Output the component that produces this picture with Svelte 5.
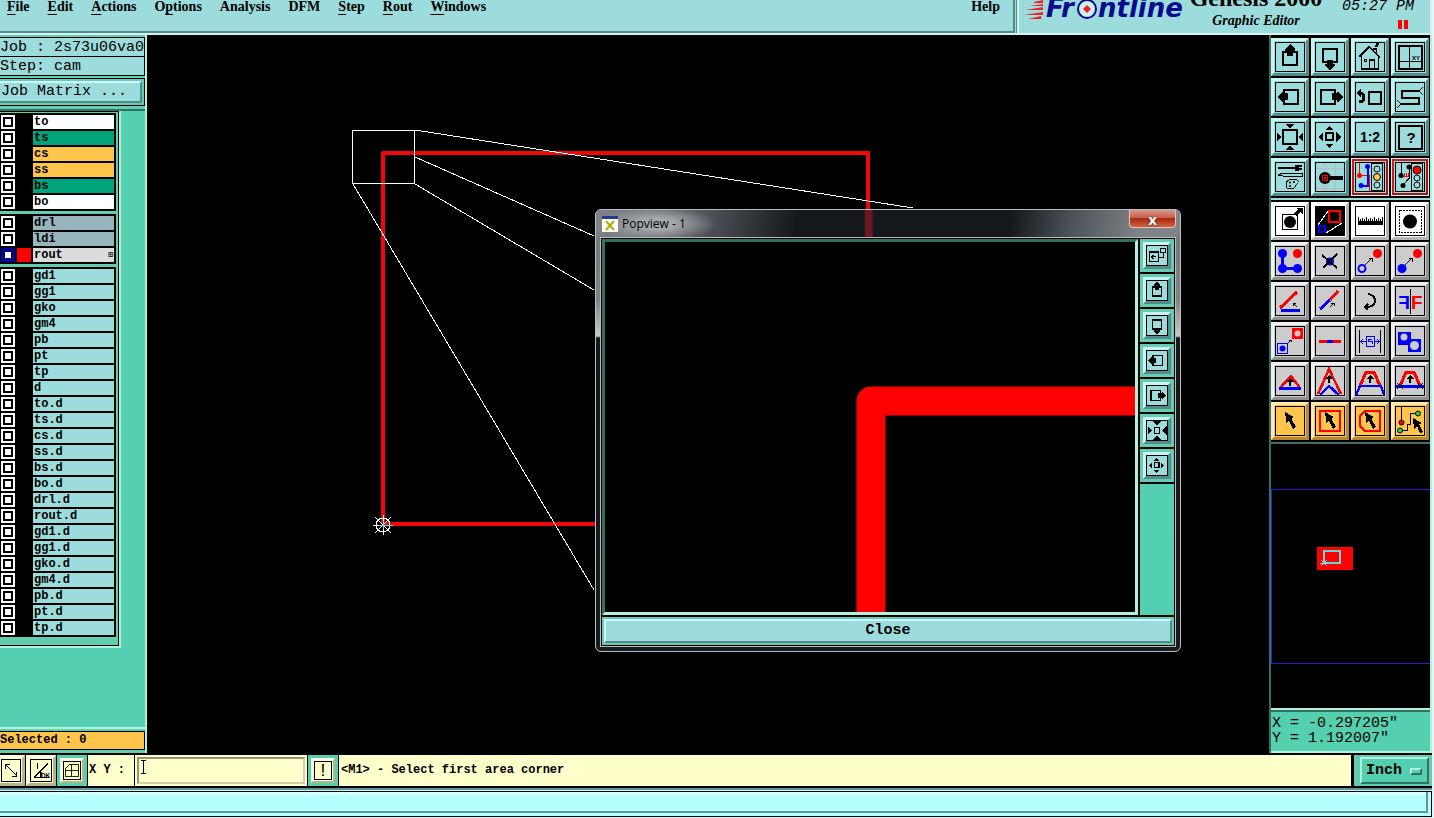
<script lang="ts">
	type Layer = { name: string; tone: string; active?: boolean };
	type Tool = { icon: string; label: string; tone?: string };

	const menus = [
		['', 'F', 'ile'],
		['', 'E', 'dit'],
		['', 'A', 'ctions'],
		['O', 'p', 'tions'],
		['Analysis', '', ''],
		['DFM', '', ''],
		['', 'S', 'tep'],
		['', 'R', 'out'],
		['', 'W', 'indows'],
	];

	const plain = (names: string): Layer[] => names.split(' ').map((name) => ({ name, tone: 'aqua' }));

	const layerGroups: Layer[][] = [
		[
			{ name: 'to', tone: 'white' },
			{ name: 'ts', tone: 'green' },
			{ name: 'cs', tone: 'amber' },
			{ name: 'ss', tone: 'amber' },
			{ name: 'bs', tone: 'green' },
			{ name: 'bo', tone: 'white' },
		],
		[
			{ name: 'drl', tone: 'slate' },
			{ name: 'ldi', tone: 'slate' },
			{ name: 'rout', tone: 'silver', active: true },
		],
		plain(
			'gd1 gg1 gko gm4 pb pt tp d to.d ts.d cs.d ss.d bs.d bo.d drl.d rout.d gd1.d gg1.d gko.d gm4.d pb.d pt.d tp.d'
		),
	];

	// Shared fragments of the 30-unit icon grid
	const cursor = '<path d="M10 6L19 11L16.5 13L21 21L18 23L14 15L11.5 17Z" fill="#000"/>';
	const upArrow = '<path d="M15 13V20" stroke="#000" stroke-width="2"/><path d="M11 16L15 12L19 16Z" fill="#000"/>';
	const neArrow = '<path d="M10 19L17 12M13.5 12H17V15.5" stroke="#000"/>';
	const light = '<rect x="16.5" y="1.5" width="11" height="27" stroke="#000"/>';

	const icons: Record<string, string> = {
		up: '<rect x="8" y="10" width="14" height="13" stroke="#000" stroke-width="2"/><path d="M15 2L20 7V9H18V14H12V9H10V7Z" fill="#000"/>',
		down: '<rect x="8" y="7" width="14" height="13" stroke="#000" stroke-width="2"/><path d="M12 18H18V22H20V24L15 28L10 24V22H12Z" fill="#000"/>',
		left: '<rect x="9" y="8" width="14" height="14" stroke="#000" stroke-width="2"/><path d="M2 15L7 10H8V11H13V18H8V20H7Z" fill="#000"/>',
		right: '<rect x="6" y="8" width="14" height="14" stroke="#000" stroke-width="2"/><path d="M28 15L23 10H22V11H17V18H22V20H23Z" fill="#000"/>',
		home: '<path d="M4 15L14 5L25 15M6.5 14V27H23.5V14M14.5 26V18H19.5V26M18.5 9V7H21.5V11M20 4H22V2H24" stroke="#000" stroke-width="1.5"/><rect x="9.5" y="17.5" width="2" height="2" stroke="#000"/>',
		panes: '<rect x="4" y="4" width="23" height="23" stroke="#000" stroke-width="2"/><path d="M14.5 4V27M4 19.5H27" stroke="#000"/><text x="17" y="18" font-size="6" font-weight="700" font-family="Liberation Sans, sans-serif" fill="#000">XY</text>',
		back: '<rect x="14" y="10" width="12" height="12" stroke="#000" stroke-width="2"/><path d="M5 11Q9 11 9 15Q9 20 4 20" stroke="#000" stroke-width="3"/><path d="M1 11L6 7V15Z" fill="#000"/>',
		serpent: '<path d="M25 9H7V16H24V22H5" stroke="#000" stroke-width="2"/><path d="M24 9L28 5M24 9L28 13M6 22L2 18M6 22L2 26" stroke="#000"/>',
		grow: '<rect x="8" y="8" width="14" height="14" stroke="#000" stroke-width="2"/><path d="M10 2H20L15 6ZM10 28H20L15 24ZM2 10V20L6 15ZM28 10V20L24 15Z" fill="#000"/>',
		squeeze: '<rect x="11" y="11" width="8" height="8" stroke="#000" stroke-width="2"/><path d="M8 1H22L15 8ZM8 29H22L15 22ZM1 8V22L8 15ZM29 8V22L22 15Z" fill="#000"/>',
		spread: '<rect x="11" y="11" width="7" height="7" stroke="#000" stroke-width="2"/><path d="M10 8H19L14.5 4ZM10 22H19L14.5 26ZM8 10V20L3 15ZM21 10V20L26 15Z" fill="#000"/>',
		ratio: '<text x="15" y="20" text-anchor="middle" font-size="14" font-weight="700" font-family="Liberation Sans, sans-serif" fill="#000">1:2</text>',
		help: '<rect x="4" y="4" width="23" height="23" stroke="#000" stroke-width="2"/><text x="16" y="21" text-anchor="middle" font-size="15" font-weight="700" font-family="Liberation Sans, sans-serif" fill="#000">?</text>',
		setup: '<path d="M3 6H20" stroke="#000" stroke-width="2"/><path d="M27 4H23V7H27" stroke="#000" stroke-width="2"/><path d="M20 3H24V9H20Z" fill="#000"/><path d="M3 13L8 11H27V14H8Z" stroke="#000"/><path d="M11 23Q11 17 18 17Q24 17 23 21Q22 22 21 23Q20 27 15 27Q11 27 11 23Z" stroke="#000"/><circle cx="15" cy="20.5" r="1" fill="#000"/><circle cx="19" cy="20" r="1" fill="#000"/><circle cx="15" cy="24" r="1" fill="#000"/>',
		probe: '<path d="M9.5 1V29M20.5 1V29M1 6.5H29M1 15.5H29M1 26.5H29" stroke="#c4b4bc"/><circle cx="10" cy="16" r="6" fill="#000"/><path d="M14 16H28" stroke="#000" stroke-width="4"/><rect x="7.5" y="13.5" width="5" height="5" stroke="#f00"/><rect x="9" y="15" width="2" height="2" fill="#f00"/>',
		netOn: `${light}<path d="M4.5 1V13.5H14.5V29" stroke="#f00"/><path d="M12.5 5V23.5H6" stroke="#00f" stroke-width="2"/><circle cx="12.5" cy="4.5" r="2.5" fill="#00f"/><circle cx="6" cy="23.5" r="2.5" fill="#00f"/><circle cx="4.5" cy="13.5" r="2.5" fill="#f00"/><circle cx="22" cy="7" r="3" stroke="#000"/><circle cx="22" cy="15" r="3.5" fill="#ffc44c" stroke="#000"/><circle cx="22" cy="23" r="3" stroke="#000"/>`,
		netOff: `${light}<path d="M6.5 1V13M14.5 5V16L8 23" stroke="#000"/><path d="M6 14H14M9.5 11V14M11.5 11V14M13.5 11V14" stroke="#f00"/><circle cx="14" cy="5" r="2.5" fill="#000"/><circle cx="6" cy="13.5" r="2.5" fill="#000"/><circle cx="8" cy="23.5" r="2.5" fill="#000"/><circle cx="22" cy="8" r="4" fill="#f00" stroke="#000"/><circle cx="22" cy="16" r="3" stroke="#000"/><circle cx="22" cy="23" r="3" stroke="#000"/>`,
		pull: '<rect x="7.5" y="8.5" width="15" height="15" stroke="#000"/><circle cx="15" cy="16" r="6" fill="#000"/><path d="M20 9L25 4" stroke="#000" stroke-width="3"/><path d="M21 2H28V9Z" fill="#000"/>',
		popview: '<rect width="30" height="30" fill="#000"/><path d="M13 5L3 19M27 17L11 27" stroke="#fff"/><rect x="14" y="5" width="11" height="11" stroke="#f00" stroke-width="2"/><rect x="4" y="20" width="6" height="6" stroke="#00f" stroke-width="2"/>',
		ruler: '<path d="M3 15H28V19H3Z" fill="#000"/><path d="M3.5 11V15M5.5 13V15M7.5 12V15M9.5 13V15M11.5 11V15M13.5 13V15M15.5 12V15M17.5 13V15M19.5 11V15M21.5 13V15M23.5 12V15M25.5 13V15M27.5 11V15" stroke="#000"/>',
		pick: '<rect x="4.5" y="4.5" width="22" height="22" stroke="#000" stroke-dasharray="2 1"/><circle cx="15" cy="15.5" r="7" fill="#000"/>',
		chain: '<path d="M7.5 7.5V22.5H22" stroke="#00f" stroke-width="3"/><circle cx="7.5" cy="7.5" r="4.5" fill="#00f"/><circle cx="7.5" cy="22.5" r="4.5" fill="#00f"/><circle cx="22.5" cy="22.5" r="4.5" fill="#00f"/><circle cx="22.5" cy="7.5" r="4.5" fill="#f00"/>',
		erase: '<circle cx="15" cy="15.5" r="4" fill="#00f"/><path d="M7 9L22 22M22 8L8 22" stroke="#000" stroke-width="2"/>',
		move: `<circle cx="7" cy="22.5" r="3.5" stroke="#00f" stroke-width="2"/><circle cx="22.5" cy="7.5" r="4.5" fill="#f00"/>${neArrow}`,
		copy: `<circle cx="7" cy="22.5" r="4.5" fill="#00f"/><circle cx="22.5" cy="7.5" r="4.5" fill="#f00"/>${neArrow}`,
		angle: '<path d="M5 22L22 6" stroke="#f00" stroke-width="3"/><path d="M6 24.5H25" stroke="#00f" stroke-width="3"/><path d="M22 21L18 17M18 20V17H21" stroke="#000"/>',
		extend: '<path d="M15 14L23 5" stroke="#f00" stroke-width="3"/><path d="M5 23L15 14" stroke="#00f" stroke-width="3"/><path d="M15 21L19 17M16 17H19V20" stroke="#000"/>',
		rotate: '<path d="M13 8Q20 9 20 15Q20 21 10 21M13 18L10 21L13 24" stroke="#000" stroke-width="2"/>',
		mirror: '<path d="M15.5 3V28" stroke="#000"/><text x="16" y="23" font-size="19" font-weight="700" font-family="Liberation Sans, sans-serif" fill="#f00">F</text><text x="-15" y="23" transform="scale(-1 1)" font-size="19" font-weight="700" font-family="Liberation Sans, sans-serif" fill="#00f">F</text>',
		swap: '<rect x="2.5" y="17.5" width="10" height="10" stroke="#00f"/><circle cx="7.5" cy="22.5" r="3" fill="#00f"/><path d="M17 2H28V13H17Z" fill="#f00"/><circle cx="22.5" cy="7.5" r="3" fill="#ccc"/><path d="M13 17L16 14M14 14H16V16" stroke="#000"/>',
		segment: '<path d="M4 15.5H26" stroke="#f00" stroke-width="3"/><path d="M12 15.5H18" stroke="#00f" stroke-width="3"/>',
		spacing: '<path d="M4.5 4V27M25.5 4V27" stroke="#000"/><path d="M6 15.5H11M19 15.5H24M8 13L6 15.5L8 18M22 13L24 15.5L22 18M17 13H13.5V15.5H17V18" stroke="#00f"/><rect x="11.5" y="10.5" width="8" height="10" stroke="#00f"/>',
		group: '<path d="M3 6H16V13H26V26H13V19H3Z" fill="#00f"/><circle cx="9" cy="11" r="3.5" fill="#ccc"/><circle cx="19.5" cy="19.5" r="4.5" fill="#ccc"/>',
		tri: `<path d="M5 22L16 10L25 22" stroke="#f00" stroke-width="2.5"/><path d="M4 22.5H26" stroke="#00f" stroke-width="3"/>${upArrow}`,
		peak: `<path d="M3 28L14 3L26 28" stroke="#f00" stroke-width="2.5"/><path d="M5 29L14 20L24 29" stroke="#00f" stroke-width="2.5"/><g transform="translate(-1 -3)">${upArrow}</g>`,
		trap: `<path d="M5 20L11 6H19L25 20" stroke="#f00" stroke-width="3"/><path d="M1 29L5 20H26L29 29" stroke="#00f" stroke-width="2.5"/><g transform="translate(0 -3)">${upArrow}</g>`,
		trapCut: `<path d="M5 20L11 6H19L25 20" stroke="#f00" stroke-width="3"/><path d="M1 20.5H29" stroke="#00f" stroke-width="3"/><path d="M2 17L8 23M8 17L2 23M22 17L28 23M28 17L22 23" stroke="#000"/><g transform="translate(0 -3)">${upArrow}</g>`,
		select: cursor,
		selectBox: `<rect x="5" y="5" width="20" height="20" stroke="#f00" stroke-width="2"/>${cursor}`,
		selectPoly: `<path d="M10 5H25V25H10L5 20V10Z" stroke="#f00" stroke-width="2"/>${cursor}`,
		selectNet: '<path d="M6.5 1V15M5 24.5H12.5V18.5H15.5V7.5H22" stroke="#000"/><circle cx="23" cy="7.5" r="2.5" fill="#2d2" stroke="#000"/><circle cx="5" cy="24.5" r="2.5" fill="#2d2" stroke="#000"/><circle cx="6.5" cy="16.5" r="2.5" fill="#f00" stroke="#000"/><path d="M18 12L27 17L24 18L28 26L25 27L22 20L19 23Z" fill="#000"/>',
		link: '<rect x="4" y="10" width="13" height="14" stroke="#000" stroke-width="2.5"/><path d="M17 18H24V11M7 17H14M10 14L7 17L10 20M20 4H27V11H20Z" stroke="#000" stroke-width="1.5"/>',
		stretch: '<path d="M6 6L24 24M6 13V6H13M24 17V24H17" stroke="#000" stroke-width="1.5"/>',
		snap: '<path d="M5 25L25 5M5 25H15M10 5V13M15 17V25H26" stroke="#000" stroke-width="1.5"/><text x="15" y="26" font-size="9" font-weight="700" font-family="Liberation Sans, sans-serif" fill="#000">DK</text>',
		mesh: '<path d="M4 12L12 4H26V26H4ZM14 4V26M4 15H26" stroke="#000" stroke-width="1.5"/>',
	};

	const viewTools: Tool[] = [
		{ icon: 'up', label: 'Pan up' },
		{ icon: 'down', label: 'Pan down' },
		{ icon: 'home', label: 'Home' },
		{ icon: 'panes', label: 'Views' },
		{ icon: 'left', label: 'Pan left' },
		{ icon: 'right', label: 'Pan right' },
		{ icon: 'back', label: 'Previous view' },
		{ icon: 'serpent', label: 'Serpentine' },
		{ icon: 'grow', label: 'Zoom in' },
		{ icon: 'spread', label: 'Zoom out' },
		{ icon: 'ratio', label: 'Scale' },
		{ icon: 'help', label: 'Query' },
		{ icon: 'setup', label: 'Setup' },
		{ icon: 'probe', label: 'Snap' },
		{ icon: 'netOn', label: 'Net display', tone: 'alert' },
		{ icon: 'netOff', label: 'Net check', tone: 'alert' },
	];

	const tone = (name: string, list: string): Tool[] =>
		list.split(' ').map((icon) => ({ icon, label: icon, tone: name }));

	const editTools: Tool[] = [
		...tone('paper', 'pull popview ruler pick'),
		...tone('grey', 'chain erase move copy angle extend rotate mirror swap segment spacing group tri peak trap trapCut'),
		...tone('gold', 'select selectBox selectPoly selectNet'),
	];

	const popTools = ['link', 'up', 'down', 'left', 'right', 'squeeze', 'spread'];

	let xy = $state('');
	let units = $state('Inch');
	let popOpen = $state(true);
</script>

{#snippet glyph(name: string)}
	<svg class="glyph" viewBox="1 1 28 28" fill="none" aria-hidden="true">{@html icons[name]}</svg>
{/snippet}

{#snippet palette(tools: Tool[])}
	<div class="palette">
		{#each tools as tool}
			<button class="tool {tool.tone ?? ''}" aria-label={tool.label}>{@render glyph(tool.icon)}</button>
		{/each}
	</div>
{/snippet}

<div class="page">
	<header class="top">
		<nav class="menubar">
			{#each menus as [pre, key, post]}
				<button class="menu">{pre}<u>{key}</u>{post}</button>
			{/each}
			<button class="menu menu-help">Help</button>
		</nav>
		<div class="brand">
			<svg class="logo" width="164" height="32" role="img" aria-label="Frontline">
				<path d="M12 2L21 0V3H12ZM4 10L21 7V10ZM8 6L21 4V6ZM2 15L21 12V15ZM6 19L19 16V19Z" fill="#f02020" />
				<text x="24" y="17">Fr</text>
				<circle cx="65" cy="9" r="9" fill="#cfeeee" stroke="#0a0a8c" stroke-width="2" />
				<path d="M65 5L69 9L65 13L61 9Z" fill="#f02020" />
				<text x="76" y="17">ntline</text>
			</svg>
			<div class="title">
				<strong>Genesis 2000</strong>
				<em>Graphic Editor</em>
			</div>
			<div class="clock">
				<span>05:27 PM</span>
				<span class="pause"></span>
			</div>
		</div>
	</header>

	<main class="work">
		<aside class="side">
			<div class="job">
				<div class="field">Job : 2s73u06va0</div>
				<div class="field">Step: cam</div>
				<div class="matrix-frame"><button class="matrix">Job Matrix ...</button></div>
			</div>
			<div class="layers">
				{#each layerGroups as group}
					<div class="group">
						{#each group as layer}
							<label class="layer">
								<input type="checkbox" class:active={layer.active} />
								<span class="swatch" class:active={layer.active}></span>
								<span class="name {layer.tone}">{layer.name}{#if layer.active}<i>⊞</i>{/if}</span>
							</label>
						{/each}
					</div>
				{/each}
			</div>
			<div class="selected"><div>Selected : 0</div></div>
		</aside>

		<section class="canvas">
			<svg class="drawing" aria-hidden="true">
				<path d="M236 489V118H721V180" class="trace" />
				<path d="M236 489H454" class="trace" />
				<rect x="205.5" y="95.5" width="62" height="53" class="wire" />
				<path d="M268 95L766 173M268 122L447 201M268 149L447 255M206 149L447 555" class="wire" />
				<circle cx="236" cy="490" r="7" class="wire" />
				<path d="M226 490H246M236 480V500M228 482L244 498M244 482L228 498" class="wire" />
				<path d="M232 490H246M236 486V494" stroke="#5fe0ea" />
			</svg>

			{#if popOpen}
				<div class="popup">
					<div class="titlebar">
						<svg width="16" height="16" aria-hidden="true">
							<rect width="16" height="16" fill="#fff" />
							<rect width="16" height="3" fill="#223a90" />
							<path d="M4 5L12 14M12 5L4 14" stroke="#b8a800" stroke-width="2" />
						</svg>
						<span>Popview - 1</span>
						<button class="shut" aria-label="Close window" onclick={() => (popOpen = false)}>x</button>
					</div>
					<div class="pop-body">
						<div class="pop-row">
							<svg class="view" aria-hidden="true">
								<path d="M266 500V159H700" />
							</svg>
							<div class="pop-tools">
								{#each popTools as icon}
									<div class="pop-cell">
										<button class="tool small" aria-label={icon}>{@render glyph(icon)}</button>
									</div>
								{/each}
							</div>
						</div>
						<div class="close-frame">
							<button class="close" onclick={() => (popOpen = false)}>Close</button>
						</div>
					</div>
				</div>
			{/if}
		</section>

		<aside class="tools">
			{@render palette(viewTools)}
			<div class="divider"></div>
			{@render palette(editTools)}
			<div class="divider dark"></div>
			<svg class="overview" aria-hidden="true">
				<rect x="0.5" y="45.5" width="180" height="174" fill="none" stroke="#2222c8" />
				<rect x="46" y="103" width="36" height="23" fill="#f00" />
				<rect x="53" y="107" width="16" height="12" fill="none" stroke="#5fd8d8" stroke-width="2" />
				<path d="M50 116L56 122M56 116L50 122M49 119H57" stroke="#9adada" />
			</svg>
			<div class="coords">X = -0.297205"<br />Y = 1.192007"</div>
		</aside>
	</main>

	<footer class="command">
		<button class="tool cream" aria-label="Stretch">{@render glyph('stretch')}</button>
		<button class="tool cream" aria-label="Snap">{@render glyph('snap')}</button>
		<div class="teal"><button class="tool cream tiny" aria-label="Grid">{@render glyph('mesh')}</button></div>
		<label class="xy" for="xy">X Y :</label>
		<div class="entry"><input id="xy" type="text" bind:value={xy} /><span class="caret"></span></div>
		<div class="teal"><button class="tool cream tiny bang">!</button></div>
		<div class="message">&lt;M1&gt; - Select first area corner</div>
		<div class="units">
			<select bind:value={units} aria-label="Units">
				<option>Inch</option>
				<option>mm</option>
			</select>
			<span class="knob"></span>
		</div>
	</footer>
	<div class="status"><div></div></div>
</div>

<style>
	:global(body) {
		background: #fff;
	}
	:global(*) {
		box-sizing: border-box;
	}
	button,
	input,
	select {
		margin: 0;
		padding: 0;
		border-radius: 0;
		color: #000;
		font: inherit;
	}
	.page {
		display: flex;
		flex-direction: column;
		min-height: 100vh;
		overflow: hidden;
		border-right: 2px solid #e8f4f4;
		background: #000;
		color: #000;
		font-family: 'Liberation Mono', monospace;
		font-size: 15px;
	}

	/* menu bar and brand */
	.top {
		display: flex;
		height: 35px;
		background: #9cdcdc;
		border-bottom: 2px solid #d4f4f4;
	}
	.menubar {
		display: flex;
		flex: 1;
		align-items: flex-start;
		gap: 18px;
		padding: 0 13px 0 7px;
		border-right: 2px solid #548c8c;
		border-bottom: 2px solid #548c8c;
		font: bold 14px/14px 'Liberation Serif', serif;
	}
	.menu {
		border: 0;
		background: none;
	}
	.menu u {
		text-underline-offset: 3px;
	}
	.menu-help {
		margin-left: auto;
	}
	.brand {
		display: flex;
		width: 415px;
		margin-left: 2px;
		border-left: 2px solid #d4f4f4;
		border-right: 2px solid #d4f4f4;
		box-shadow: -1px 0 #548c8c;
		overflow: hidden;
	}
	.logo {
		flex: none;
		margin-left: 3px;
	}
	.logo text {
		font: italic bold 26px 'DejaVu Sans', sans-serif;
		fill: #0a0a8c;
	}
	.title {
		display: flex;
		flex: 1;
		flex-direction: column;
		align-items: center;
		font-family: 'Liberation Serif', serif;
	}
	.title strong {
		margin-top: -16px;
		font-size: 24px;
		line-height: 28px;
		white-space: nowrap;
	}
	.title em {
		margin-top: 1px;
		font-size: 14px;
		font-weight: bold;
		line-height: 16px;
	}
	.clock {
		display: flex;
		flex-direction: column;
		align-items: flex-end;
		width: 104px;
		padding-right: 16px;
		font-style: italic;
		line-height: 14px;
		white-space: nowrap;
	}
	.pause {
		width: 10px;
		height: 9px;
		margin: 6px 6px 0 0;
		border: solid #f00;
		border-width: 0 4px;
	}

	/* job and layer column */
	.work {
		display: flex;
		flex: 1;
	}
	.side {
		display: flex;
		flex-direction: column;
		width: 147px;
		border-right: 2px solid #b4f0e0;
		background: #54d0b0;
	}
	.job {
		padding: 2px 0 3px;
		border-bottom: 2px solid #2f7464;
		background: #64ccb0;
	}
	.field {
		height: 20px;
		border: 1px solid #000;
		border-left: 0;
		background: #9cdcdc;
		line-height: 20px;
		white-space: nowrap;
	}
	.field + .field {
		height: 19px;
		border-top: 0;
	}
	.matrix-frame {
		margin-top: 2px;
		padding: 2px 2px 2px 0;
		border: 1px solid #000;
		border-left: 0;
	}
	.matrix {
		display: block;
		width: 100%;
		height: 22px;
		padding-left: 1px;
		border: 2px solid #548c8c;
		border-color: #d0ffff #548c8c #548c8c #d0ffff;
		border-left: 0;
		background: #9cdcdc;
		text-align: left;
		line-height: 18px;
	}
	.layers {
		display: flex;
		flex-direction: column;
		gap: 3px;
		width: 121px;
		padding: 2px 2px 9px 0;
		border: solid #b4f0e0;
		border-width: 0 2px 2px 0;
		box-shadow: inset -1px -1px #000, inset 0 1px #000;
		background: #64ccb0;
	}
	.group {
		padding-top: 2px;
		width: 116px;
		background: #000;
	}
	.layer {
		display: flex;
		gap: 2px;
		height: 14px;
		margin: 0 2px 2px 1px;
	}
	.layer input {
		width: 14px;
		height: 14px;
		border: 2px solid #fff;
		background: #fff;
		box-shadow: inset 0 0 0 2px #000;
		appearance: none;
	}
	.layer input.active {
		border-color: #0000a8;
		box-shadow: inset 0 0 0 2px #000070;
	}
	.swatch {
		width: 14px;
	}
	.swatch.active {
		background: #f00;
	}
	.name {
		display: flex;
		flex: 1;
		justify-content: space-between;
		padding-left: 1px;
		font-size: 12px;
		font-weight: bold;
		line-height: 14px;
	}
	.name i {
		padding-right: 1px;
		font-size: 8px;
		font-style: normal;
	}
	.white { background: #fff; }
	.green { background: #00a47c; }
	.amber { background: #ffc44c; }
	.slate { background: #98b4bc; }
	.silver { background: #dcdcdc; }
	.aqua { background: #9cdcdc; }
	.selected {
		margin-top: auto;
		padding: 2px 0 3px;
		border-top: 2px solid #b4f0e0;
		background: #64ccb0;
		font-size: 12px;
		font-weight: bold;
	}
	.selected div {
		height: 19px;
		border: 1px solid #000;
		border-left: 0;
		background: #ffc44c;
		line-height: 17px;
	}

	/* drawing area */
	.canvas {
		position: relative;
		flex: 1;
		min-width: 0;
		background: #000;
	}
	.drawing {
		position: absolute;
		width: 100%;
		height: 100%;
		shape-rendering: crispEdges;
	}
	.trace {
		fill: none;
		stroke: #f00808;
		stroke-width: 4;
		stroke-linejoin: round;
	}
	.wire {
		fill: none;
		stroke: #fff;
	}
	.popup {
		position: absolute;
		left: 448px;
		top: 174px;
		display: flex;
		flex-direction: column;
		width: 586px;
		height: 443px;
		padding: 0 4px 4px;
		border: 1px solid #b8bcc0;
		border-radius: 6px;
		background: linear-gradient(#707478 0, #808488 90px, #c8ccd0 126px, #14181c 128px, #181c20);
		overflow: hidden;
	}
	.titlebar {
		display: flex;
		align-items: center;
		gap: 4px;
		height: 27px;
		margin: 0 -4px;
		padding-left: 6px;
		background:
			radial-gradient(ellipse 60px 18px at 60px 14px, #a4a8ac 30%, transparent),
			linear-gradient(90deg, transparent 268px, #701820 270px, #701820 275px, transparent 278px),
			linear-gradient(100deg, #808488 0, #50545a 110px, #14181c 200px, #14181c 410px, #4c5258 470px, #808488 540px);
		font: 12px/16px 'Open Sans', sans-serif;
	}
	.shut {
		align-self: flex-start;
		width: 47px;
		height: 18px;
		margin-left: auto;
		margin-right: 4px;
		border: 1px solid #e0c8c0;
		border-top: 0;
		border-radius: 0 0 4px 4px;
		background: linear-gradient(#d8988c 0, #c86048 45%, #a82c14 50%, #d06040);
		color: #fff;
		font: bold 15px/14px 'Open Sans', sans-serif;
		text-shadow: 0 0 2px #302020;
	}
	.pop-body {
		display: flex;
		flex: 1;
		flex-direction: column;
		border: 1px solid #b8bcc0;
		padding: 1px;
		background: #000;
	}
	.pop-row {
		display: flex;
		flex: 1;
		gap: 2px;
	}
	.view {
		flex: 1;
		width: 0;
		height: 100%;
		border: 3px solid #b4f0e0;
		border-color: #34705f #b4f0e0 #b4f0e0 #34705f;
	}
	.view path {
		fill: none;
		stroke: #f00;
		stroke-width: 29;
		stroke-linejoin: round;
	}
	.pop-tools {
		display: flex;
		flex-direction: column;
		gap: 2px;
		width: 34px;
		background: linear-gradient(#000 245px, #54d0b0 245px);
	}
	.pop-cell {
		padding: 3px;
		background: #64ccb0;
	}
	.close-frame {
		margin-top: 2px;
		padding: 2px;
		background: #64ccb0;
	}
	.close {
		display: block;
		width: 100%;
		height: 24px;
		border: 2px solid #548c8c;
		border-color: #d0ffff #548c8c #548c8c #d0ffff;
		background: #9cdcdc;
		font-weight: bold;
		line-height: 18px;
	}

	/* tool palettes */
	.tools {
		display: flex;
		flex-direction: column;
		width: 163px;
		border-left: 2px solid #34705f;
		border-right: 2px solid #b4f0e0;
		padding-top: 3px;
	}
	.palette {
		display: grid;
		grid-template-columns: repeat(4, 38px);
		gap: 2px;
	}
	.tool {
		display: flex;
		width: 38px;
		height: 38px;
		padding: 1px;
		border: 3px solid;
		border-color: #c8f4f4 #548c8c #548c8c #c8f4f4;
		background: #9cdcdc;
	}
	.glyph {
		width: 100%;
		height: 100%;
		border: 1px solid #000;
		shape-rendering: crispEdges;
	}
	.glyph :global(circle) {
		shape-rendering: auto;
	}
	.small {
		width: 28px;
		height: 27px;
		padding: 0;
	}
	.alert {
		border-color: #d01818 #b01010 #b01010 #d01818;
		outline: 1px solid #c8f4f4;
		outline-offset: -1px;
	}
	.paper {
		border-color: #fff #b4b4b4 #b4b4b4 #fff;
		background: #fff;
	}
	.grey {
		border-color: #f0f0f0 #909090 #909090 #f0f0f0;
		background: #ccc;
	}
	.gold {
		border-color: #ffe8b4 #b48834 #b48834 #ffe8b4;
		background: #ffc44c;
	}
	.divider {
		height: 2px;
		margin: 2px 0;
		background: #9cdcdc;
	}
	.divider.dark {
		margin-bottom: 0;
		background: #606c6c;
		border-bottom: 1px solid #34705f;
	}
	.overview {
		flex: 1;
		width: 100%;
		min-height: 0;
		border-bottom: 2px solid #b4f0e0;
		shape-rendering: crispEdges;
	}
	.coords {
		height: 43px;
		padding: 4px 1px;
		border-top: 2px solid #34705f;
		border-bottom: 2px solid #b4f0e0;
		background: #54d0b0;
		line-height: 15px;
		white-space: nowrap;
	}

	/* command line */
	.command {
		display: flex;
		gap: 1px;
		height: 35px;
		padding: 2px 0;
		background: #000;
		font-size: 12px;
		font-weight: bold;
	}
	.cream {
		width: 30px;
		height: 31px;
		border-color: #ffffe4 #b8b490 #b8b490 #ffffe4;
		background: #ffffcc;
	}
	.cream:first-child {
		border-left: 0;
	}
	.command > .cream:first-child {
		width: 25px;
	}
	.teal {
		padding: 3px;
		background: #54d0b0;
	}
	.teal .tiny {
		width: 24px;
		height: 25px;
		padding: 1px;
		border: 2px solid;
		border-color: #ffffe4 #b8b490 #b8b490 #ffffe4;
	}
	.teal .bang {
		padding: 0;
		align-items: center;
		justify-content: center;
		font-size: 18px;
		font-weight: normal;
		line-height: 18px;
		box-shadow: inset 0 0 0 1px #ffffcc, inset 0 0 0 2px #000;
	}
	.xy {
		width: 46px;
		padding-left: 1px;
		background: #ffffcc;
		line-height: 31px;
		white-space: nowrap;
	}
	.entry {
		position: relative;
		width: 172px;
		padding: 2px;
		background: #ffffcc;
	}
	.entry input {
		width: 100%;
		height: 27px;
		padding: 0 8px;
		border: 2px solid;
		border-color: #949474 #d0d0a8 #d0d0a8 #949474;
		background: #ffffcc;
	}
	.caret {
		position: absolute;
		left: 6px;
		top: 5px;
		width: 5px;
		height: 14px;
		border: solid #000;
		border-width: 1px 0;
		background: linear-gradient(90deg, transparent 2px, #000 2px, #000 3px, transparent 3px);
	}
	.message {
		flex: 1;
		margin-right: 2px;
		padding-left: 2px;
		background: #ffffcc;
		line-height: 31px;
	}
	.units {
		position: relative;
		width: 78px;
		padding: 2px 3px 2px 6px;
		background: #64ccb0;
	}
	.units select {
		width: 100%;
		height: 27px;
		padding-left: 4px;
		border: 2px solid;
		border-color: #b4f0e0 #34705f #34705f #b4f0e0;
		background: #54d0b0;
		font-size: 15px;
		appearance: none;
	}
	.knob {
		position: absolute;
		right: 10px;
		top: 13px;
		width: 12px;
		height: 7px;
		border: 2px solid;
		border-color: #b4f0e0 #34705f #34705f #b4f0e0;
		pointer-events: none;
	}

	/* progress strip */
	.status {
		height: 30px;
		padding-top: 1px;
		border-top: 2px solid #649494;
		background: #b4ffff;
	}
	.status div {
		height: 26px;
		border: 1px solid #000;
		border-left: 0;
		box-shadow: inset -3px -3px #b4ffff, inset -5px -5px #649494, inset 0 3px #dcffff;
	}
</style>
